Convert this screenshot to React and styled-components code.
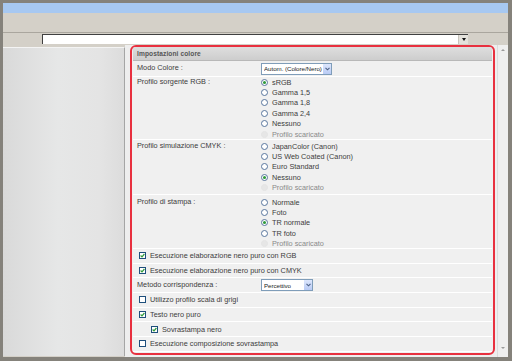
import styled, { createGlobalStyle } from 'styled-components'

const Global = createGlobalStyle`
  html, body { margin: 0; padding: 0; background: #8a8780; }
  * { box-sizing: border-box; }
`

const Frame = styled.div`
  width: 512px;
  height: 361px;
  display: flex;
  flex-direction: column;
  border-style: solid;
  border-color: #85827b;
  border-width: 3px 4px 4px 3px;
  background: #d4d0c8;
  font-family: 'Liberation Sans', Arial, sans-serif;
  font-size: 7.3px;
  color: #3c3c3c;
  overflow: hidden;
`

const TitleBar = styled.div`
  height: 10px;
  background: #a7c8f1;
`

const Toolbar = styled.div`
  height: 20px;
  background: #d4d0c8;
  border-bottom: 1px solid #aaa69e;
`

const AddressRow = styled.div`
  height: 12px;
  display: flex;
  align-items: flex-start;
  padding: 1px 0 0 39px;
`

const Address = styled.div`
  width: 426px;
  height: 10px;
  background: #fff;
  border-left: 1px solid #404040;
  border-top: 1px solid #404040;
  display: flex;
  justify-content: flex-end;
  align-items: center;
`

const DropArrow = styled.div`
  width: 10px;
  height: 9px;
  display: flex;
  align-items: center;
  justify-content: center;
  background: #e4e2dc;
  border-left: 1px solid #c8c4bc;
  &::after {
    content: '';
    border-left: 2.5px solid transparent;
    border-right: 2.5px solid transparent;
    border-top: 3px solid #111;
  }
`

const Body = styled.div`
  flex: 1;
  display: flex;
  min-height: 0;
`

const LeftPanel = styled.div`
  width: 122px;
  margin-top: 2px;
  margin-bottom: 1px;
  background: linear-gradient(90deg, #d9d9d9 0%, #e6e7e7 45%, #e4e4e4 80%, #dcdcdc 100%);
  border-right: 1px solid #a5a5a5;
  border-top: 1px solid #f4f4f4;
`

const Main = styled.div`
  flex: 1;
  background: #eeeeee;
  padding: 0 2px 2px 5px;
  display: flex;
`

const Panel = styled.div`
  flex: 1;
  border: 2px solid #e8303f;
  border-radius: 6px;
  background: #f0f0f0;
  display: flex;
  flex-direction: column;
  overflow: hidden;
`

const Header = styled.div`
  height: 14px;
  margin: 0 1px;
  padding-left: 4px;
  display: flex;
  align-items: center;
  background: linear-gradient(#dedede, #cdcdcd);
  border-bottom: 1px solid #b8b8b8;
  font-weight: bold;
  font-size: 6.6px;
  color: #555;
  letter-spacing: 0.1px;
`

const Row = styled.div`
  display: flex;
  align-items: ${p => (p.$top ? 'flex-start' : 'center')};
  height: ${p => p.$h}px;
  padding-top: ${p => p.$pt || 0}px;
  border-bottom: 1px solid #ffffff;
  margin: 0 1px;
`

const Label = styled.div`
  width: 128px;
  padding-left: 4px;
  line-height: 10.4px;
  flex-shrink: 0;
`

const Options = styled.div`
  display: flex;
  flex-direction: column;
`

const OptionItem = styled.div`
  height: 10.4px;
  display: flex;
  align-items: center;
  gap: 4px;
  color: ${p => (p.$disabled ? '#8a8a8a' : '#3c3c3c')};
`

const RadioDot = styled.span`
  width: 7px;
  height: 7px;
  border-radius: 50%;
  border: 1px solid ${p => (p.$disabled ? '#e4e4e4' : '#58759d')};
  background: ${p => (p.$disabled ? '#e6e6e6' : '#fff')};
  display: flex;
  align-items: center;
  justify-content: center;
  &::after {
    content: '';
    display: ${p => (p.$on ? 'block' : 'none')};
    width: 3px;
    height: 3px;
    border-radius: 50%;
    background: #2f9a3a;
  }
`

const Select = styled.div`
  width: ${p => p.$w}px;
  height: 12px;
  background: #fff;
  border: 1px solid #7f9db9;
  display: flex;
  align-items: center;
  padding-left: 2px;
  color: #222;
  font-size: 6.2px;
  letter-spacing: -0.05px;
  white-space: nowrap;
`

const SelectText = styled.span`
  flex: 1;
  min-width: 0;
  overflow: hidden;
`

const SelectButton = styled.span`
  width: 9px;
  height: 10px;
  flex-shrink: 0;
  background: linear-gradient(#dce6fc, #b9cbf5);
  border-left: 1px solid #fff;
  display: flex;
  align-items: center;
  justify-content: center;
  svg { display: block; }
`

const CheckRow = styled.div`
  height: 14.7px;
  display: flex;
  align-items: center;
  gap: 4px;
  padding-left: ${p => (p.$indent ? 18 : 6)}px;
  border-bottom: 1px solid #ffffff;
  margin: 0 1px;
`

const Box = styled.span`
  width: 7px;
  height: 7px;
  border: 1px solid #1e4f7c;
  background: #fff;
  display: flex;
  align-items: center;
  justify-content: center;
  svg { display: block; }
`

const Scrollbar = styled.div`
  width: 11px;
  background: #efefef;
  border-left: 1px solid #dcdcdc;
  display: flex;
  flex-direction: column;
  justify-content: space-between;
  align-items: center;
  padding: 4px 0 8px;
`

const Arrow = styled.span`
  border-left: 2px solid transparent;
  border-right: 2px solid transparent;
  ${p => (p.$down ? 'border-top: 2px solid #9a9a9a;' : 'border-bottom: 2px solid #9a9a9a;')}
`

function Radio({ label, on, disabled }) {
  return (
    <OptionItem $disabled={disabled}>
      <RadioDot $on={on} $disabled={disabled} />
      {label}
    </OptionItem>
  )
}

function CheckLine({ label, checked, indent }) {
  return (
    <CheckRow $indent={indent}>
      <Box>
        {checked && (
          <svg width="5" height="5" viewBox="0 0 5 5">
            <path d="M0.6 2.5 L2 3.9 L4.4 1" stroke="#2f9a3a" strokeWidth="1.2" fill="none" />
          </svg>
        )}
      </Box>
      {label}
    </CheckRow>
  )
}

function Chevron() {
  return (
    <svg width="5" height="4" viewBox="0 0 5 4">
      <path d="M0.5 0.8 L2.5 2.8 L4.5 0.8" stroke="#4d6185" strokeWidth="1.1" fill="none" />
    </svg>
  )
}

function Dropdown({ width, value }) {
  return (
    <Select $w={width}>
      <SelectText>{value}</SelectText>
      <SelectButton><Chevron /></SelectButton>
    </Select>
  )
}

const groups = [
  {
    label: 'Profilo sorgente RGB :',
    h: 63,
    pt: 0,
    items: ['sRGB', 'Gamma 1,5', 'Gamma 1,8', 'Gamma 2,4', 'Nessuno'],
    on: 0,
  },
  {
    label: 'Profilo simulazione CMYK :',
    h: 55,
    pt: 1,
    items: ['JapanColor (Canon)', 'US Web Coated (Canon)', 'Euro Standard', 'Nessuno'],
    on: 3,
  },
  {
    label: 'Profilo di stampa :',
    h: 54,
    pt: 2,
    items: ['Normale', 'Foto', 'TR normale', 'TR foto'],
    on: 2,
  },
]

export default function App() {
  return (
    <Frame>
      <Global />
      <TitleBar />
      <Toolbar />
      <AddressRow>
        <Address>
          <DropArrow />
        </Address>
      </AddressRow>
      <Body>
        <LeftPanel />
        <Main>
          <Panel>
            <Header>Impostazioni colore</Header>
            <Row $h={16}>
              <Label>Modo Colore :</Label>
              <Dropdown width={71} value="Autom. (Colore/Nero)" />
            </Row>
            {groups.map(g => (
              <Row key={g.label} $h={g.h} $pt={g.pt} $top>
                <Label>{g.label}</Label>
                <Options>
                  {g.items.map((it, i) => (
                    <Radio key={it} label={it} on={i === g.on} />
                  ))}
                  <Radio label="Profilo scaricato" disabled />
                </Options>
              </Row>
            ))}
            <CheckLine label="Esecuzione elaborazione nero puro con RGB" checked />
            <CheckLine label="Esecuzione elaborazione nero puro con CMYK" checked />
            <Row $h={14.7}>
              <Label>Metodo corrispondenza :</Label>
              <Dropdown width={52} value="Percettivo" />
            </Row>
            <CheckLine label="Utilizzo profilo scala di grigi" />
            <CheckLine label="Testo nero puro" checked />
            <CheckLine label="Sovrastampa nero" checked indent />
            <CheckLine label="Esecuzione composizione sovrastampa" />
          </Panel>
        </Main>
        <Scrollbar>
          <Arrow />
          <Arrow $down />
        </Scrollbar>
      </Body>
    </Frame>
  )
}
